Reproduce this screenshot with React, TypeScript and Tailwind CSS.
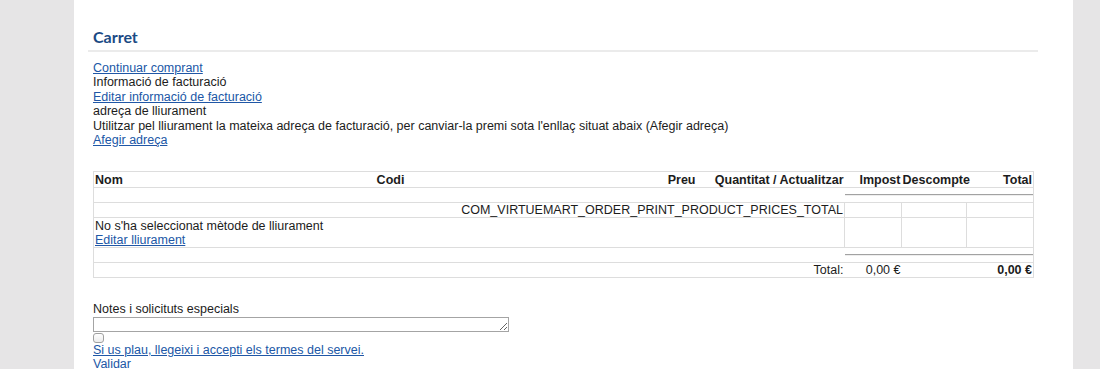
export default function App() {
  const link = "text-[#2057a6] underline";
  const cell = "p-0 px-px align-middle";

  return (
    <div className="h-[369px] overflow-hidden bg-[#e6e5e6]">
      <div className="ml-[74px] h-full w-[999px] bg-white pl-[14px] pr-[35px] font-['Liberation_Sans',Arial,sans-serif] text-[12.5px] leading-[14.4px] text-[#1c1c1c]">
        <h2 className="border-b-2 border-[#ebebeb] pl-[5px] pt-[27px] pb-[3px] font-['Lato',sans-serif] text-[16px] font-bold leading-[20px] text-[#1b4a84]">
          Carret
        </h2>

        <div className="px-[5px]">
          <div className="mt-[9px]">
            <a href="#" className={`block w-fit ${link}`}>Continuar comprant</a>
            <div>Informació de facturació</div>
            <a href="#" className={`block w-fit ${link}`}>Editar informació de facturació</a>
            <div>adreça de lliurament</div>
            <div>
              Utilitzar pel lliurament la mateixa adreça de facturació, per canviar-la premi sota l'enllaç situat abaix (Afegir adreça)
            </div>
            <a href="#" className={`block w-fit ${link}`}>Afegir adreça</a>
          </div>

          <table className="mt-[24px] w-[940px] table-fixed border-collapse border border-[#dddddd] leading-[14px]">
            <colgroup>
              <col className="w-[207px]" />
              <col className="w-[180px]" />
              <col className="w-[216px]" />
              <col className="w-[148px]" />
              <col className="w-[57px]" />
              <col className="w-[65px]" />
              <col className="w-[67px]" />
            </colgroup>
            <thead>
              <tr className="h-[16px] border-b border-[#dddddd] font-bold">
                <th className={`${cell} text-left`}>Nom</th>
                <th className={`${cell} text-center`}>Codi</th>
                <th className={`${cell} text-right`}>Preu</th>
                <th className={`${cell} text-right whitespace-nowrap`}>Quantitat / Actualitzar</th>
                <th className={`${cell} text-right`}>Impost</th>
                <th className={`${cell} text-right whitespace-nowrap`}>Descompte</th>
                <th className={`${cell} text-right`}>Total</th>
              </tr>
            </thead>
            <tbody>
              <tr className="h-[15px] border-b border-[#dddddd]">
                <td colSpan={4} className={cell}></td>
                <td colSpan={3} className="p-0 align-middle">
                  <div className="border-t border-[#a2a2a2] border-b border-b-[#eeeeee]" />
                </td>
              </tr>
              <tr className="h-[15px] border-b border-[#dddddd]">
                <td colSpan={4} className={`${cell} text-right`}>
                  COM_VIRTUEMART_ORDER_PRINT_PRODUCT_PRICES_TOTAL
                </td>
                <td className={`${cell} border-l border-[#dddddd]`}></td>
                <td className={`${cell} border-l border-[#dddddd]`}></td>
                <td className={`${cell} border-l border-[#dddddd]`}></td>
              </tr>
              <tr className="h-[30px] border-b border-[#dddddd] leading-[14.4px]">
                <td colSpan={4} className={cell}>
                  <div>No s'ha seleccionat mètode de lliurament</div>
                  <a href="#" className={`block w-fit ${link}`}>Editar lliurament</a>
                </td>
                <td className={`${cell} border-l border-[#dddddd]`}></td>
                <td className={`${cell} border-l border-[#dddddd]`}></td>
                <td className={`${cell} border-l border-[#dddddd]`}></td>
              </tr>
              <tr className="h-[15px] border-b border-[#dddddd]">
                <td colSpan={4} className={cell}></td>
                <td colSpan={3} className="p-0 align-middle">
                  <div className="border-t border-[#a2a2a2] border-b border-b-[#eeeeee]" />
                </td>
              </tr>
              <tr className="h-[15px]">
                <td colSpan={4} className={`${cell} text-right`}>Total:</td>
                <td className={`${cell} text-right whitespace-nowrap`}>0,00 €</td>
                <td className={cell}></td>
                <td className={`${cell} text-right font-bold whitespace-nowrap`}>0,00 €</td>
              </tr>
            </tbody>
          </table>

          <div className="mt-[24px]">
            <div>Notes i solicituts especials</div>
            <textarea
              rows={1}
              className="block h-[15px] w-[416px] resize border border-[#a4a4a4] p-0 text-[12px] leading-[13px] outline-none"
            />
            <input
              type="checkbox"
              className="mt-px block h-[10px] w-[11px] appearance-none rounded-[3px] border border-[#a0a0a0] bg-gradient-to-b from-white to-[#ececec]"
            />
            <a href="#" className={`block w-fit ${link}`}>Si us plau, llegeixi i accepti els termes del servei.</a>
            <a href="#" className={`block w-fit ${link}`}>Validar</a>
          </div>
        </div>
      </div>
    </div>
  );
}
